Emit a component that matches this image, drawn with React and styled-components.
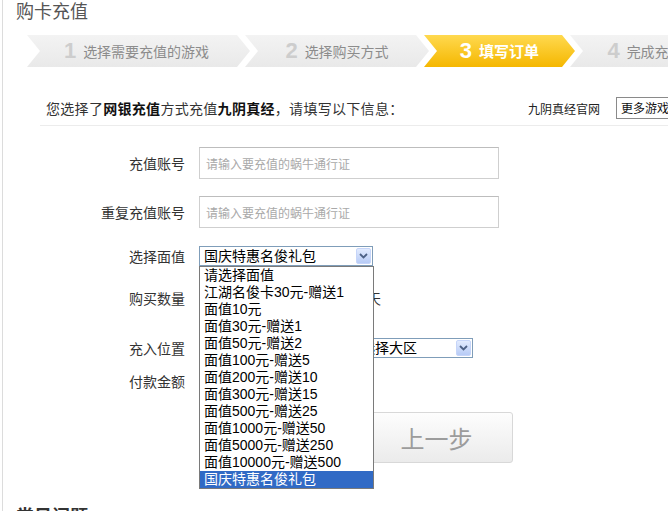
import React from 'react';
import styled, { createGlobalStyle } from 'styled-components';

const GlobalStyle = createGlobalStyle`
  html, body {
    margin: 0;
    padding: 0;
    background: #fff;
    overflow: hidden;
  }
  body {
    font-family: "DejaVu Sans", "Noto Sans CJK SC", sans-serif;
    color: #333;
  }
`;

const steps = [
  { no: 1, text: '选择需要充值的游戏', w: 223 },
  { no: 2, text: '选择购买方式', w: 184 },
  { no: 3, text: '填写订单', w: 151, active: true },
  { no: 4, text: '完成充值', w: 150 },
];

const options = [
  '请选择面值',
  '江湖名俊卡30元-赠送1',
  '面值10元',
  '面值30元-赠送1',
  '面值50元-赠送2',
  '面值100元-赠送5',
  '面值200元-赠送10',
  '面值300元-赠送15',
  '面值500元-赠送25',
  '面值1000元-赠送50',
  '面值5000元-赠送250',
  '面值10000元-赠送500',
  '国庆特惠名俊礼包',
];

const Arrow = () => (
  <ArrowBox>
    <svg width="9" height="6" viewBox="0 0 9 6">
      <path d="M1 1 L4.5 4.5 L8 1" fill="none" stroke="#4d6185" strokeWidth="1.8" />
    </svg>
  </ArrowBox>
);

export default function App() {
  return (
    <>
      <GlobalStyle />
      <Page>
        <Title>购卡充值</Title>

        <Steps>
          {steps.map((s, i) => (
            <Step key={s.no} w={s.w} first={i === 0} active={s.active}>
              <StepNo active={s.active}>{s.no}</StepNo>
              <StepText active={s.active}>{s.text}</StepText>
            </Step>
          ))}
        </Steps>

        <InfoBar>
          <InfoText>
            您选择了<b>网银充值</b>方式充值<b>九阴真经</b>，请填写以下信息：
          </InfoText>
          <RightGroup>
            <SiteLink>九阴真经官网</SiteLink>
            <MoreBox>更多游戏</MoreBox>
          </RightGroup>
        </InfoBar>

        <Row h={32} mt={21}>
          <Label>充值账号</Label>
          <TextInput placeholder="请输入要充值的蜗牛通行证" />
        </Row>

        <Row h={32} mt={17}>
          <Label>重复充值账号</Label>
          <TextInput placeholder="请输入要充值的蜗牛通行证" />
        </Row>

        <Row h={20} mt={18}>
          <Label>选择面值</Label>
          <SelectWrap>
            <Select w={174}>
              <span>国庆特惠名俊礼包</span>
              <Arrow />
            </Select>
            <DropList>
              {options.map((o, i) => (
                <Option key={o} selected={i === options.length - 1}>{o}</Option>
              ))}
            </DropList>
          </SelectWrap>
        </Row>

        <Row h={20} mt={22}>
          <Label>购买数量</Label>
          <SmallInput />
          <Unit>天</Unit>
        </Row>

        <Row h={20} mt={30}>
          <Label>充入位置</Label>
          <Select w={139}>
            <span>请选择游戏</span>
            <Arrow />
          </Select>
          <Select w={131} ml={4}>
            <span>请选择大区</span>
            <Arrow />
          </Select>
        </Row>

        <Row h={20} mt={13}>
          <Label>付款金额</Label>
          <Amount>0 元</Amount>
        </Row>

        <Row h={51} mt={21}>
          <Label />
          <NextButton>下一步</NextButton>
          <PrevButton>上一步</PrevButton>
        </Row>

        <Faq>常见问题</Faq>
      </Page>
    </>
  );
}

const Page = styled.div`
  margin-left: 2px;
  border-left: 1px solid #dcdcdc;
  height: 511px;
  display: flex;
  flex-direction: column;

  & > * {
    flex-shrink: 0;
  }
`;

const Title = styled.h1`
  margin: 0 0 0 13px;
  height: 22px;
  font-size: 18px;
  line-height: 20px;
  font-weight: normal;
  color: #555;
  font-family: "Noto Sans CJK SC", sans-serif;
`;

const Steps = styled.div`
  display: flex;
  margin: 13px 0 0 24px;
  height: 32px;
`;

const Step = styled.div`
  flex-shrink: 0;
  display: flex;
  align-items: center;
  justify-content: center;
  gap: 7px;
  box-sizing: border-box;
  width: ${p => p.w}px;
  height: 32px;
  padding: 0 ${p => (p.first ? 17 : 13)}px 0 13px;
  margin-left: ${p => (p.first ? 0 : -5)}px;
  clip-path: polygon(0 0, calc(100% - 13px) 0, 100% 50%, calc(100% - 13px) 100%, 0 100%, 13px 50%);
  background: ${p => (p.active
    ? 'linear-gradient(#ffd94f, #f5b700)'
    : 'linear-gradient(#f3f3f3, #e9e9e9)')};
`;

const StepNo = styled.span`
  font-family: "Liberation Sans", Arial, sans-serif;
  font-weight: bold;
  font-size: 22px;
  line-height: 32px;
  color: ${p => (p.active ? '#fff' : '#cdcdcd')};
`;

const StepText = styled.span`
  font-family: "Noto Sans CJK SC", sans-serif;
  font-size: ${p => (p.active ? 15 : 14)}px;
  font-weight: ${p => (p.active ? 'bold' : 'normal')};
  color: ${p => (p.active ? '#fff' : '#8c8c8c')};
  line-height: 32px;
  white-space: nowrap;
`;

const InfoBar = styled.div`
  display: flex;
  align-items: center;
  width: 640px;
  height: 34px;
  margin: 24px 0 0 37px;
  padding-left: 6px;
  border-bottom: 1px solid #ececec;
`;

const InfoText = styled.div`
  font-family: "Noto Sans CJK SC", sans-serif;
  font-size: 14px;
  letter-spacing: 0.3px;
  color: #333;
  white-space: nowrap;

  b {
    color: #111;
  }
`;

const RightGroup = styled.div`
  margin-left: auto;
  display: flex;
  align-items: center;
  gap: 16px;
`;

const SiteLink = styled.span`
  font-family: "Noto Sans CJK SC", sans-serif;
  font-size: 12px;
  color: #222;
`;

const MoreBox = styled.div`
  box-sizing: border-box;
  width: 70px;
  height: 22px;
  border: 1px solid #8a8a8a;
  padding-left: 4px;
  font-family: "Noto Sans CJK SC", sans-serif;
  font-size: 12px;
  line-height: 20px;
  color: #111;
  white-space: nowrap;
`;

const Row = styled.div`
  display: flex;
  align-items: center;
  height: ${p => p.h}px;
  margin-top: ${p => p.mt}px;
`;

const Label = styled.div`
  flex-shrink: 0;
  width: 182px;
  margin-right: 14px;
  text-align: right;
  font-family: "Noto Sans CJK SC", sans-serif;
  font-size: 14px;
  line-height: 20px;
  color: #333;
`;

const TextInput = styled.input`
  box-sizing: border-box;
  width: 300px;
  height: 32px;
  border: 1px solid #cfcfcf;
  border-top-color: #bdbdbd;
  padding: 0 6px;
  font-family: "Noto Sans CJK SC", sans-serif;
  font-size: 12px;
  color: #333;
  outline: none;

  &::placeholder {
    color: #a9a9a9;
  }
`;

const SelectWrap = styled.div`
  position: relative;
`;

const Select = styled.div`
  position: relative;
  flex-shrink: 0;
  box-sizing: border-box;
  width: ${p => p.w}px;
  height: 20px;
  margin-left: ${p => p.ml || 0}px;
  border: 1px solid #7f9db9;
  background: #fff;
  display: flex;
  align-items: center;
  padding-left: 4px;
  font-family: "Liberation Sans", "Noto Sans CJK SC", sans-serif;
  font-size: 14px;
  line-height: 18px;
  color: #000;
  white-space: nowrap;
`;

const ArrowBox = styled.span`
  position: absolute;
  right: 1px;
  top: 1px;
  width: 15px;
  height: 16px;
  display: flex;
  align-items: center;
  justify-content: center;
  border-radius: 2px;
  background: linear-gradient(#e2ebfe, #b7cbf6);
  border: 1px solid #c6d5f9;
  box-sizing: border-box;
`;

const DropList = styled.div`
  position: absolute;
  top: 100%;
  left: 0;
  z-index: 10;
  box-sizing: border-box;
  width: 175px;
  border: 1px solid #7a7a7a;
  background: #fff;
`;

const Option = styled.div`
  height: 17px;
  line-height: 17px;
  padding-left: 4px;
  font-family: "Liberation Sans", "Noto Sans CJK SC", sans-serif;
  font-size: 14px;
  white-space: nowrap;
  color: ${p => (p.selected ? '#fff' : '#000')};
  background: ${p => (p.selected ? '#316ac5' : 'transparent')};
`;

const SmallInput = styled.input`
  box-sizing: border-box;
  width: 160px;
  height: 20px;
  border: 1px solid #cfcfcf;
`;

const Unit = styled.span`
  margin-left: 8px;
  font-family: "Noto Sans CJK SC", sans-serif;
  font-size: 14px;
  color: #333;
`;

const Amount = styled.span`
  font-size: 14px;
  color: #e4393c;
`;

const NextButton = styled.button`
  flex-shrink: 0;
  box-sizing: border-box;
  width: 150px;
  height: 51px;
  margin-right: 11px;
  border: 1px solid #e49b00;
  border-radius: 3px;
  background: linear-gradient(#ffc84a, #f5a300);
  color: #fff;
  font-family: "Noto Sans CJK SC", sans-serif;
  font-size: 24px;
`;

const PrevButton = styled.button`
  flex-shrink: 0;
  box-sizing: border-box;
  width: 153px;
  height: 51px;
  border: 1px solid #d8d8d8;
  border-radius: 3px;
  background: linear-gradient(#fdfdfd, #ebebeb);
  color: #9c9c9c;
  font-family: "Noto Sans CJK SC", sans-serif;
  font-size: 24px;
  padding: 0;
`;

const Faq = styled.h2`
  margin: 41px 0 0 13px;
  font-family: "Noto Sans CJK SC", sans-serif;
  font-size: 18px;
  line-height: 22px;
  font-weight: bold;
  color: #333;
`;
